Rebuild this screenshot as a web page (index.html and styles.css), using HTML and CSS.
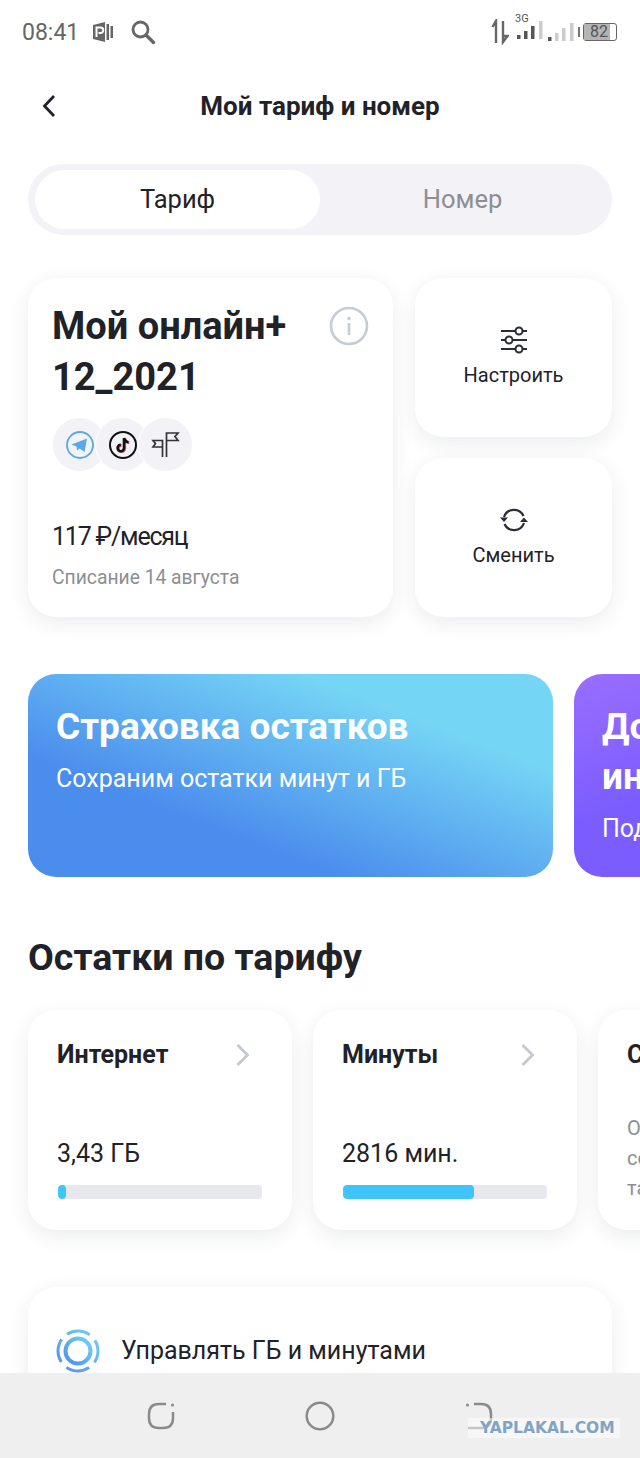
FILE: index.html
```html
<!DOCTYPE html>
<html>
<head>
  <title>Мой тариф и номер</title>
  <link rel="stylesheet" href="styles.css">
</head>
<body>
  <div class="screen">
    <div class="status-bar">
      <div class="status-left">
        <span class="clock">08:41</span>
        <svg class="parking" width="22" height="22" viewBox="0 0 22 22">
          <path d="M1 4 L13 1 V21 L1 18 Z" fill="#666"/>
          <rect x="14.500" y="3" width="2.500" height="16" fill="#666"/>
          <rect x="18.500" y="5" width="2.500" height="12" fill="#666"/>
          <path d="M4.500 16 V6.500 H8.500 A2.700 2.700 0 0 1 8.500 12 H6.500" fill="none" stroke="#fff" stroke-width="2"/>
        </svg>
        <svg class="search" width="26" height="26" viewBox="0 0 26 26">
          <circle cx="10.500" cy="10.500" r="7.500" fill="none" stroke="#666" stroke-width="2.800"/>
          <path d="M16 16 L23.500 23.500" stroke="#666" stroke-width="3.400" stroke-linecap="round"/>
        </svg>
      </div>
      <div class="status-right">
        <svg width="18" height="26" viewBox="0 0 18 26">
          <path d="M5 24 V3 M1.500 8 L5 2 V8 M12 2 V23 L16.500 17 H12" fill="none" stroke="#666" stroke-width="2.400"/>
        </svg>
        <div class="signal">
          <span class="net">3G</span>
          <svg width="30" height="18" viewBox="0 0 30 18">
            <rect x="2" y="14" width="3.500" height="4" fill="#555"/>
            <rect x="9" y="10" width="3.500" height="8" fill="#555"/>
            <rect x="16" y="5" width="3.500" height="13" fill="#555"/>
            <rect x="24" y="0" width="3.500" height="18" fill="#ccc"/>
          </svg>
        </div>
        <svg class="signal-two" width="30" height="18" viewBox="0 0 30 18">
          <rect x="2" y="14" width="3.500" height="4" fill="#555"/>
          <rect x="9" y="10" width="3.500" height="8" fill="#ccc"/>
          <rect x="16" y="5" width="3.500" height="13" fill="#ccc"/>
          <rect x="24" y="0" width="3.500" height="18" fill="#ccc"/>
        </svg>
        <div class="battery-tip"></div>
        <div class="battery">
          <div class="battery-level"></div>
          <span class="battery-text">82</span>
        </div>
      </div>
    </div>

    <div class="header">
      <svg class="back" width="16" height="26" viewBox="0 0 16 26">
        <path d="M13 3 L3.500 13 L13 23" fill="none" stroke="#1f2229" stroke-width="2.800"/>
      </svg>
      <div class="title">Мой тариф и номер</div>
    </div>

    <div class="tabs">
      <div class="tab tab-active">Тариф</div>
      <div class="tab">Номер</div>
    </div>

    <div class="tariff-row">
      <div class="card tariff-card">
        <div class="tariff-top">
          <div class="tariff-name">Мой онлайн+<br>12_2021</div>
          <svg class="info" width="40" height="40" viewBox="0 0 40 40">
            <circle cx="20" cy="20" r="18" fill="none" stroke="#c6cbd4" stroke-width="2.600"/>
            <rect x="18.700" y="17" width="2.600" height="12" fill="#c6cbd4"/>
            <circle cx="20" cy="12.500" r="1.800" fill="#c6cbd4"/>
          </svg>
        </div>
        <div class="apps">
          <div class="app">
            <svg width="30" height="30" viewBox="0 0 30 30">
              <circle cx="15" cy="15" r="13" fill="none" stroke="#5aa9e6" stroke-width="1.800"/>
              <path d="M6.500 14.500 L22 8.500 L19.500 22 L14.500 18.500 L12 20.500 L11.500 16.500 Z" fill="#5aa9e6"/>
            </svg>
          </div>
          <div class="app">
            <svg width="30" height="30" viewBox="0 0 30 30">
              <circle cx="15" cy="15" r="13" fill="none" stroke="#111" stroke-width="2"/>
              <path d="M16 8 V18 A3.200 3.200 0 1 1 12.800 14.800 M16 8 C16.500 10.500 18 12 20.500 12.300" fill="none" stroke="#f0527a" stroke-width="2.600" transform="translate(.8 .6)"/>
              <path d="M16 8 V18 A3.200 3.200 0 1 1 12.800 14.800 M16 8 C16.500 10.500 18 12 20.500 12.300" fill="none" stroke="#111" stroke-width="2.600"/>
            </svg>
          </div>
          <div class="app">
            <svg width="30" height="30" viewBox="0 0 30 30">
              <path d="M15.500 27 V3 H27 L24 6.500 L27 10.500 H15.500 M11.500 27 V10.500 H2 L4.500 13.500 L2 17 H11.500" fill="none" stroke="#333" stroke-width="1.700"/>
            </svg>
          </div>
        </div>
        <div class="price">117 ₽/месяц</div>
        <div class="charge">Списание 14 августа</div>
      </div>
      <div class="actions">
        <div class="card action">
          <svg width="30" height="30" viewBox="0 0 30 30">
            <g fill="none" stroke="#2a2d33" stroke-width="2">
              <path d="M2 6 H16 M24 6 H28 M2 15 H6 M14 15 H28 M2 24 H16 M24 24 H28"/>
              <circle cx="20" cy="6" r="3.500"/>
              <circle cx="10" cy="15" r="3.500"/>
              <circle cx="20" cy="24" r="3.500"/>
            </g>
          </svg>
          <span>Настроить</span>
        </div>
        <div class="card action">
          <svg width="30" height="30" viewBox="0 0 30 30">
            <g fill="none" stroke="#2a2d33" stroke-width="2.200">
              <path d="M5 12 A10.500 10.500 0 0 1 24.500 11"/>
              <path d="M25 18 A10.500 10.500 0 0 1 5.500 19"/>
            </g>
            <path d="M1 12.500 H9 L5 17 Z M21 17 H29 L25 12.500 Z" fill="#2a2d33"/>
          </svg>
          <span>Сменить</span>
        </div>
      </div>
    </div>

    <div class="promo-row">
      <div class="promo promo-blue">
        <div class="promo-title">Страховка остатков</div>
        <div class="promo-text">Сохраним остатки минут и ГБ</div>
      </div>
      <div class="promo promo-violet">
        <div class="promo-title">Домашний<br>интернет</div>
        <div class="promo-text">Подключить</div>
      </div>
    </div>

    <h2 class="section-title">Остатки по тарифу</h2>

    <div class="rest-row">
      <div class="card rest">
        <div class="rest-head">
          <span class="rest-name">Интернет</span>
          <svg width="16" height="24" viewBox="0 0 16 24">
            <path d="M2.500 2 L12.500 12 L2.500 22" fill="none" stroke="#c3c8d1" stroke-width="2.800"/>
          </svg>
        </div>
        <div class="rest-value">3,43 ГБ</div>
        <div class="bar"><div class="bar-fill" style="width: 4%"></div></div>
      </div>
      <div class="card rest">
        <div class="rest-head">
          <span class="rest-name">Минуты</span>
          <svg width="16" height="24" viewBox="0 0 16 24">
            <path d="M2.500 2 L12.500 12 L2.500 22" fill="none" stroke="#c3c8d1" stroke-width="2.800"/>
          </svg>
        </div>
        <div class="rest-value">2816 мин.</div>
        <div class="bar"><div class="bar-fill bar-wide" style="width: 64%"></div></div>
      </div>
      <div class="card rest">
        <div class="rest-head">
          <span class="rest-name">СМС</span>
        </div>
        <div class="rest-note">Оплата<br>согласно<br>тарифу</div>
      </div>
    </div>

    <div class="card manage">
      <svg width="44" height="44" viewBox="0 0 44 44">
        <defs>
          <linearGradient id="ring" x1="0" y1="1" x2="1" y2="0">
            <stop offset="0" stop-color="#4d90ea"/>
            <stop offset="1" stop-color="#74d2f3"/>
          </linearGradient>
        </defs>
        <circle cx="22" cy="22" r="12.500" fill="none" stroke="url(#ring)" stroke-width="4"/>
        <circle cx="22" cy="22" r="20" fill="none" stroke="url(#ring)" stroke-width="3" stroke-dasharray="24 7.400" stroke-dashoffset="12"/>
      </svg>
      <span class="manage-text">Управлять ГБ и минутами</span>
    </div>

    <div class="nav-bar">
      <svg width="30" height="30" viewBox="0 0 30 30">
        <path d="M20 3 H13 Q3 3 3 13 V17 Q3 27 13 27 H17 Q27 27 27 17 V11" fill="none" stroke="#8a8a8a" stroke-width="2.500"/>
        <circle cx="26.500" cy="4" r="1.500" fill="#8a8a8a"/>
      </svg>
      <svg width="30" height="32" viewBox="0 0 30 32">
        <circle cx="15" cy="16" r="13.300" fill="none" stroke="#8a8a8a" stroke-width="2.500"/>
      </svg>
      <svg width="30" height="30" viewBox="0 0 30 30">
        <path d="M10 3 H17 Q27 3 27 13 V17 Q27 27 17 27 H4" fill="none" stroke="#8a8a8a" stroke-width="2.500"/>
        <circle cx="3.500" cy="4" r="1.500" fill="#8a8a8a"/>
      </svg>
    </div>
    <div class="watermark">YAPLAKAL.COM</div>
  </div>
</body>
</html>
```

FILE: styles.css
```css
html, body {
  margin: 0;
  padding: 0;
}

body {
  font-family: Roboto, "Open Sans", sans-serif;
  color: #1f2229;
  background-color: #fff;
}

.screen {
  position: relative;
  width: 640px;
  height: 1458px;
  overflow: hidden;
  background-color: #fff;
}

.status-bar {
  height: 64px;
  display: flex;
  justify-content: space-between;
  align-items: center;
  padding: 0 23px 0 22px;
}

.status-left {
  display: flex;
  align-items: center;
  gap: 13px;
}

.clock {
  font-size: 23px;
  color: #666;
}

.search {
  margin-left: 3px;
}

.status-right {
  display: flex;
  align-items: center;
}

.signal {
  position: relative;
  margin-left: 6px;
}

.signal-two {
  margin-left: 1px;
}

.net {
  position: absolute;
  left: 0;
  top: -9px;
  font-size: 11px;
  color: #555;
}

.battery-tip {
  width: 2px;
  height: 10px;
  margin: 0 3px 0 2px;
  background-color: #777;
}

.battery {
  position: relative;
  width: 32px;
  height: 16px;
  border: 1.500px solid #666;
  border-radius: 3px;
}

.battery-level {
  width: 82%;
  height: 100%;
  background-color: #b4b4b4;
}

.battery-text {
  position: absolute;
  left: 6px;
  top: -2px;
  font-size: 16px;
  color: #555;
}

.header {
  position: relative;
  height: 84px;
  display: flex;
  align-items: center;
  justify-content: center;
}

.back {
  position: absolute;
  left: 41px;
  top: 29px;
}

.title {
  font-size: 26px;
  font-weight: 700;
  color: #1f2229;
}

.tabs {
  height: 59px;
  margin: 16px 28px 0;
  padding: 6px 7px;
  display: flex;
  background-color: #f2f2f7;
  border-radius: 36px;
}

.tab {
  width: 285px;
  display: flex;
  align-items: center;
  justify-content: center;
  padding-bottom: 2px;
  font-size: 25.500px;
  color: #8c8e94;
}

.tab-active {
  background-color: #fff;
  border-radius: 30px;
  color: #1f2229;
}

.card {
  background-color: #fff;
  border-radius: 28px;
  box-shadow: 0px 6px 20px rgba(30, 40, 70, 0.09);
}

.tariff-row {
  margin: 43px 28px 0;
  display: flex;
  gap: 22px;
}

.tariff-card {
  width: 365px;
  height: 339px;
  box-sizing: border-box;
  padding: 23px 24px 0;
}

.tariff-top {
  display: flex;
  justify-content: space-between;
  align-items: flex-start;
}

.tariff-name {
  font-size: 38px;
  font-weight: 700;
  line-height: 51px;
}

.info {
  margin-top: 5px;
}

.apps {
  display: flex;
  margin: 15px 0 0 1px;
}

.app {
  width: 53px;
  height: 53px;
  margin-right: -10px;
  display: flex;
  align-items: center;
  justify-content: center;
  border-radius: 50%;
  background-color: #f2f2f7;
  box-shadow: -1px 0 0 #fff;
}

.price {
  margin-top: 51px;
  font-size: 25px;
  letter-spacing: -1.2px;
}

.charge {
  margin-top: 15px;
  font-size: 19.300px;
  color: #8c8e94;
}

.actions {
  width: 197px;
  display: flex;
  flex-direction: column;
  gap: 21px;
}

.action {
  height: 159px;
  box-sizing: border-box;
  padding-bottom: 4px;
  display: flex;
  flex-direction: column;
  align-items: center;
  justify-content: center;
  gap: 8px;
  font-size: 20px;
}

.promo-row {
  margin: 57px 0 0 28px;
  display: flex;
  gap: 21px;
  width: 900px;
}

.promo {
  height: 203px;
  box-sizing: border-box;
  padding: 28px 28px 0;
  border-radius: 28px;
  color: #fff;
}

.promo-blue {
  width: 525px;
  background: linear-gradient(to top right, #4b8ded 30%, #75d5f5 76%);
}

.promo-violet {
  width: 300px;
  background: linear-gradient(160deg, #9a6eff, #7a5cff 50%);
}

.promo-title {
  font-size: 37px;
  font-weight: 700;
  line-height: 50px;
  white-space: nowrap;
}

.promo-text {
  margin-top: 12px;
  font-size: 25px;
  white-space: nowrap;
}

.section-title {
  margin: 52px 0 0 28px;
  font-size: 37.500px;
  line-height: 56px;
  font-weight: 700;
}

.rest-row {
  margin: 25px 0 0 28px;
  display: flex;
  gap: 21px;
  width: 900px;
}

.rest {
  width: 264px;
  height: 220px;
  flex-shrink: 0;
  box-sizing: border-box;
  padding: 30px 29px 0;
}

.rest-head {
  display: flex;
  justify-content: space-between;
  align-items: center;
  padding-right: 12px;
}

.rest-name {
  font-size: 25px;
  font-weight: 700;
}

.rest-value {
  margin-top: 70px;
  font-size: 25px;
}

.rest-note {
  margin-top: 44px;
  font-size: 20px;
  line-height: 30px;
  color: #8c8e94;
}

.bar {
  margin: 17px 1px 0;
  height: 14px;
  background-color: #e7e8ed;
  border-radius: 4px;
  overflow: hidden;
}

.bar-fill {
  height: 100%;
  background-color: #3fc5fb;
  border-radius: 4px;
}

.manage {
  margin: 57px 28px 0;
  height: 140px;
  box-sizing: border-box;
  padding: 42px 28px 0;
  display: flex;
  align-items: flex-start;
  gap: 21px;
  font-size: 25px;
}

.manage-text {
  margin-top: 7px;
}

.nav-bar {
  position: absolute;
  left: 0;
  bottom: 0;
  width: 640px;
  height: 85px;
  padding: 0 146px;
  box-sizing: border-box;
  display: flex;
  align-items: center;
  justify-content: space-between;
  background-color: #efefef;
}

.watermark {
  position: absolute;
  left: 468px;
  top: 1418px;
  padding: 0 5px 0 12px;
  line-height: 20px;
  font-family: "DejaVu Sans", sans-serif;
  font-size: 15.500px;
  font-weight: 700;
  color: #7fa4c4;
  background-color: rgba(255, 255, 255, 0.5);
}
```
